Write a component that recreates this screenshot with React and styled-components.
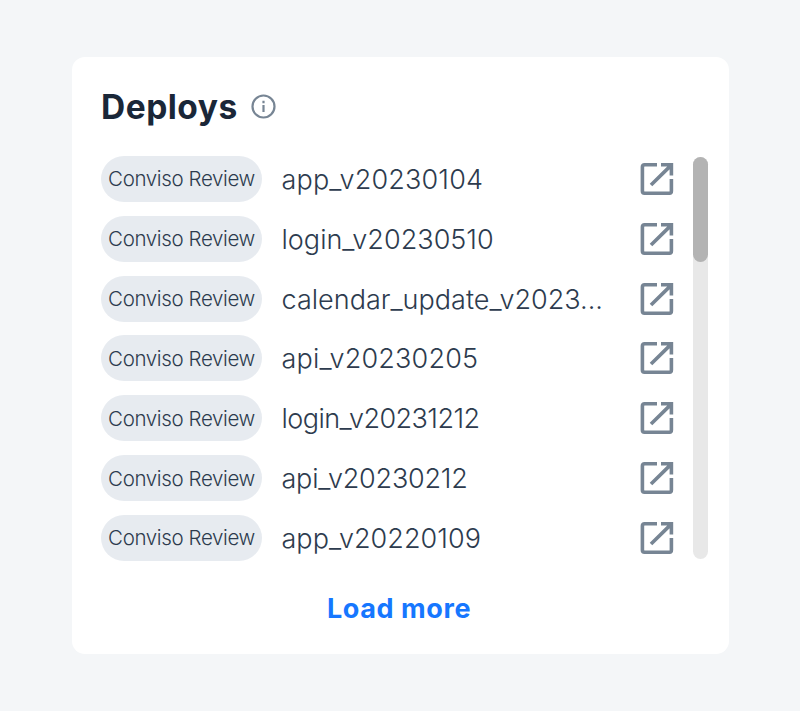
import React from "react";
import styled, { createGlobalStyle } from "styled-components";

const GlobalStyle = createGlobalStyle`
  * { box-sizing: border-box; }
  body { margin: 0; background: #fff; font-family: Inter, "Liberation Sans", sans-serif; }
`;

const Page = styled.main`
  width: 800px;
  height: 711px;
  padding: 57px 71px 57px 72px;
  background: #f4f6f8;
`;

const Card = styled.section`
  display: flex;
  flex-direction: column;
  width: 657px;
  height: 597px;
  padding: 28px 21.5px 24px 29px;
  border-radius: 13px;
  background: #fff;
`;

const Header = styled.header`
  display: flex;
  align-items: center;
  height: 44px;
`;

const Title = styled.h1`
  width: 150px;
  margin: 0;
  color: #1a2738;
  font-size: 33.5px;
  font-weight: 700;
  line-height: 44px;
  letter-spacing: 0.5px;
  white-space: nowrap;
`;

const InfoIcon = styled.svg`
  width: 25px;
  height: 25px;
  margin-bottom: 2px;
  flex: none;
`;

const Body = styled.div`
  display: flex;
  justify-content: space-between;
  margin-top: 27px;
`;

const List = styled.ul`
  display: grid;
  gap: 14px;
  width: 573px;
  margin: 0;
  padding: 0;
  list-style: none;
`;

const Row = styled.li`
  display: flex;
  align-items: center;
  height: 45.83px;
`;

const Badge = styled.span`
  display: flex;
  align-items: center;
  justify-content: center;
  width: 161px;
  height: 46px;
  border-radius: 23px;
  background: #e7ebf0;
  color: #2d3b4e;
  font-size: 20.5px;
  font-weight: 300;
  letter-spacing: -0.38px;
  white-space: nowrap;
`;

const Name = styled.span`
  flex: 1;
  margin-left: 19.5px;
  padding-top: 2px;
  color: #2d3b4e;
  font-size: 27px;
  font-weight: 300;
  line-height: 46px;
  letter-spacing: ${(p) => p.$tracking}px;
  white-space: nowrap;
`;

const OpenIcon = styled.svg`
  width: 34px;
  height: 34px;
  flex: none;
`;

const Track = styled.div`
  width: 14.5px;
  height: 402px;
  margin-top: 1px;
  border-radius: 8px;
  background: #e8e8e8;
`;

const Thumb = styled.div`
  height: 105px;
  border-radius: 8px;
  background: #b3b3b3;
`;

const LoadMore = styled.button`
  align-self: center;
  margin: 31px 10.5px 0 0;
  padding: 0;
  border: 0;
  background: none;
  color: #1677ff;
  font: 700 27px/34px Inter, sans-serif;
  letter-spacing: 0.6px;
  white-space: nowrap;
`;

const deploys = [
  { name: "app_v20230104", tracking: 0.17 },
  { name: "login_v20230510", tracking: 0.02 },
  { name: "calendar_update_v2023...", tracking: 0.02 },
  { name: "api_v20230205", tracking: 0.17 },
  { name: "login_v20231212", tracking: -0.55 },
  { name: "api_v20230212", tracking: -0.22 },
  { name: "app_v20220109", tracking: 0.04 },
];

export default function App() {
  return (
    <>
      <GlobalStyle />
      <Page>
        <Card>
          <Header>
            <Title>Deploys</Title>
            <InfoIcon viewBox="0 0 25 25" fill="none" stroke="#778594" strokeWidth="2.2">
              <circle cx="12.5" cy="12.5" r="11" />
              <path d="M12.5 11v7M12.5 6.8v2.4" />
            </InfoIcon>
          </Header>
          <Body>
            <List>
              {deploys.map(({ name, tracking }) => (
                <Row key={name}>
                  <Badge>Conviso Review</Badge>
                  <Name $tracking={tracking}>{name}</Name>
                  <OpenIcon viewBox="0 0 34 34" fill="none" stroke="#778594" strokeWidth="3.6">
                    <path d="M17 2.8H4.5Q2.4 2.8 2.4 4.9V29.1Q2.4 31.2 4.5 31.2H29.5Q31.4 31.2 31.4 29.1V17" />
                    <path d="M21 2.8H31.4V13.5M31 3.4L11 23" />
                    <path d="M26 3H32V9Z" fill="#778594" stroke="none" />
                  </OpenIcon>
                </Row>
              ))}
            </List>
            <Track><Thumb /></Track>
          </Body>
          <LoadMore>Load more</LoadMore>
        </Card>
      </Page>
    </>
  );
}
